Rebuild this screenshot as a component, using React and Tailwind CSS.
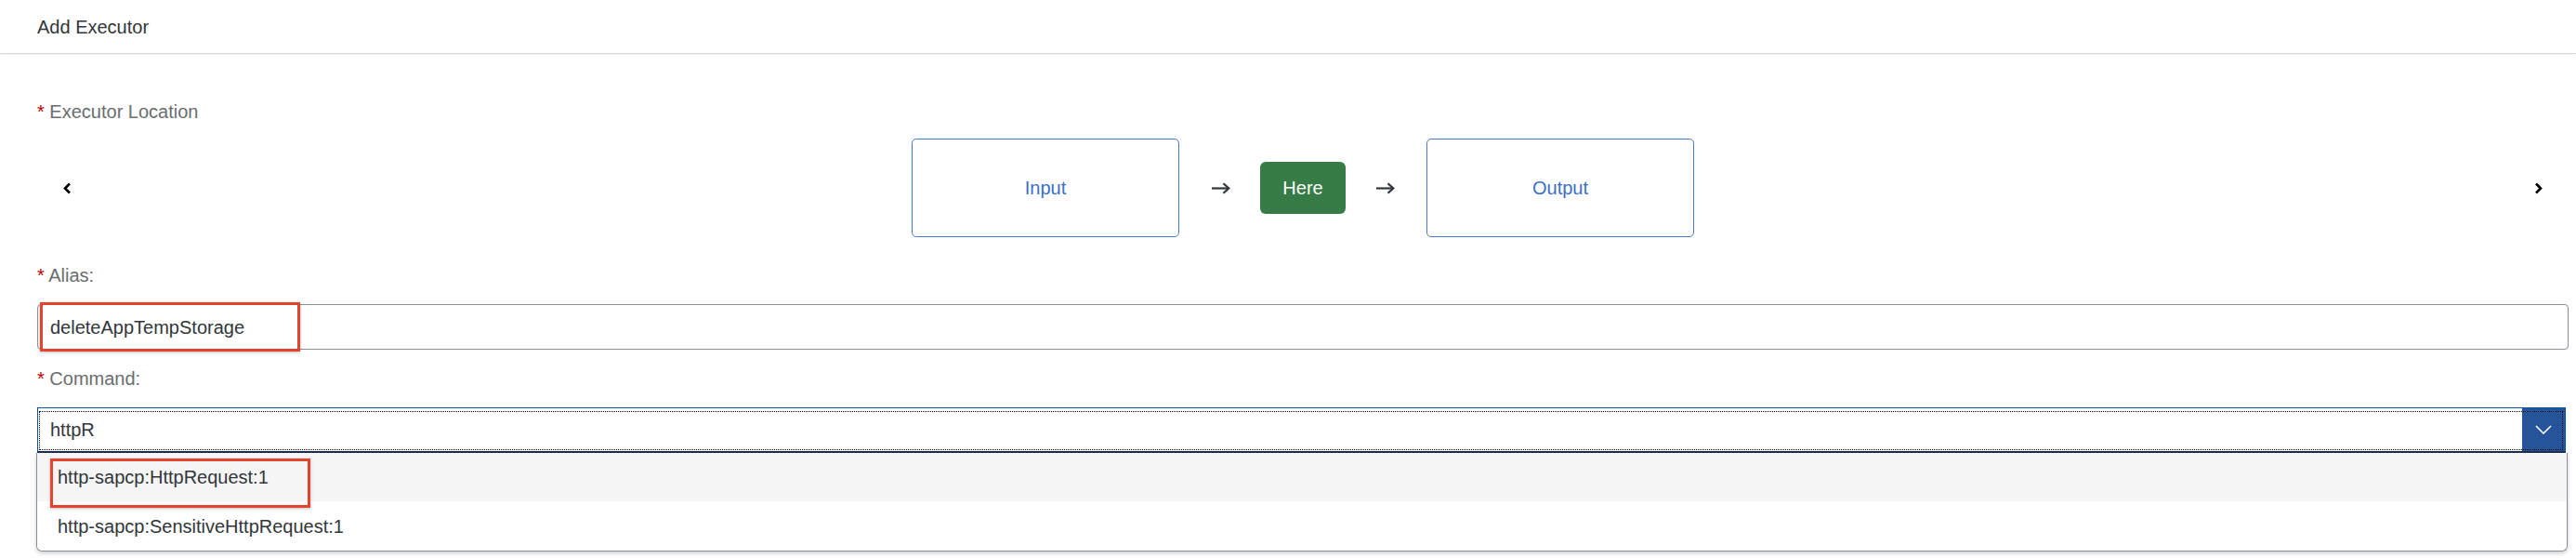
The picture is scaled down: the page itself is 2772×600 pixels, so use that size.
import React from "react";

function Label({ children }) {
  return (
    <div className="text-[20px] leading-[24px] text-[#6a6d70]">
      <span className="text-[#bb0000]">*</span> {children}
    </div>
  );
}

function Arrow() {
  return (
    <svg width="21" height="13" viewBox="0 0 21 13" className="shrink-0">
      <path d="M1 6.5 H19" stroke="#32363a" strokeWidth="2.2" fill="none" />
      <path d="M13.5 1.2 L19.3 6.5 L13.5 11.8" stroke="#32363a" strokeWidth="2.2" fill="none" strokeLinejoin="miter" />
    </svg>
  );
}

function Chevron({ dir }) {
  return (
    <svg width="10" height="13" viewBox="0 0 10 13">
      {dir === "left" ? (
        <path d="M8 1.5 L3 6.5 L8 11.5" stroke="#000" strokeWidth="2.6" fill="none" />
      ) : (
        <path d="M2 1.5 L7 6.5 L2 11.5" stroke="#000" strokeWidth="2.6" fill="none" />
      )}
    </svg>
  );
}

export default function App() {
  return (
    <div className="w-[2772px] h-[600px] bg-white font-['Liberation_Sans',Arial,sans-serif] text-[#32363a] overflow-hidden">
      <div className="h-[58px] border-b border-[#d9d9d9] shadow-[0_1px_2px_rgba(0,0,0,0.06)] flex items-center px-10 text-[20px] leading-[24px] text-[#32363a]">
        Add Executor
      </div>

      <div className="pt-[50px] pl-10 pr-2">
        <Label>Executor Location</Label>

        <div className="mt-[17px] flex items-center h-[106px]">
          <div className="w-[64px] flex justify-center">
            <Chevron dir="left" />
          </div>
          <div className="flex-1 flex items-center justify-center">
            <div className="w-[288px] h-[106px] border border-[#4a78c8] rounded-[5px] flex items-center justify-center text-[20px] text-[#3a6fcb]">
              Input
            </div>
            <div className="ml-[34px] mr-[32px] flex items-center">
              <Arrow />
            </div>
            <div className="w-[92px] h-[56px] rounded-[6px] bg-[#377c46] text-white flex items-center justify-center text-[20px]">
              Here
            </div>
            <div className="ml-[32px] mr-[34px] flex items-center">
              <Arrow />
            </div>
            <div className="w-[288px] h-[106px] border border-[#4a78c8] rounded-[5px] flex items-center justify-center text-[20px] text-[#3a6fcb]">
              Output
            </div>
          </div>
          <div className="w-[64px] flex justify-center">
            <Chevron dir="right" />
          </div>
        </div>

        <div className="mt-[29px]">
          <Label>Alias:</Label>
        </div>

        <div className="mt-[19px] relative h-[49px] border border-[#89919a] rounded-[4px] flex items-center pl-[13px] text-[20px] leading-[24px] text-[#32363a]">
          deleteAppTempStorage
          <div className="absolute left-[2px] top-[-3px] w-[280px] h-[53px] border-[3px] border-[#e4432d] shadow-[0_1px_3px_rgba(0,0,0,0.25)] pointer-events-none" />
        </div>

        <div className="mt-[19px]">
          <Label>Command:</Label>
        </div>

        <div className="mt-[19px] relative">
          <div className="relative h-[49px] border border-[#0854a0] border-b-2 border-b-[#1d2d4e] flex items-stretch mr-[3px]">
            <div className="flex-1 flex items-center pl-[13px] text-[20px] leading-[24px] text-[#32363a]">
              httpR
            </div>
            <div className="w-[46px] bg-[#26549b] flex items-center justify-center">
              <svg width="18" height="10" viewBox="0 0 18 10">
                <path d="M1 1 L9 9 L17 1" stroke="#ffffff" strokeWidth="1.6" fill="none" />
              </svg>
            </div>
            <div className="absolute left-[1px] top-[3px] right-[2px] bottom-[1px] border border-dotted border-black pointer-events-none" />
          </div>

          <div className="relative ml-[-1px] mr-[1px] border border-t-0 border-[#89919a] rounded-b-[6px] shadow-[0_2px_4px_rgba(0,0,0,0.2)] overflow-visible">
            <div className="h-[52px] bg-[#f5f5f5] flex items-center pl-[22px] text-[20px] leading-[24px] text-[#32363a]">
              http-sapcp:HttpRequest:1
            </div>
            <div className="h-[53px] bg-white rounded-b-[6px] flex items-center pl-[22px] text-[20px] leading-[24px] text-[#32363a]">
              http-sapcp:SensitiveHttpRequest:1
            </div>
            <div className="absolute left-[14px] top-[6px] w-[280px] h-[53px] border-[3px] border-[#e4432d] shadow-[0_1px_3px_rgba(0,0,0,0.25)] pointer-events-none" />
          </div>
        </div>
      </div>
    </div>
  );
}
